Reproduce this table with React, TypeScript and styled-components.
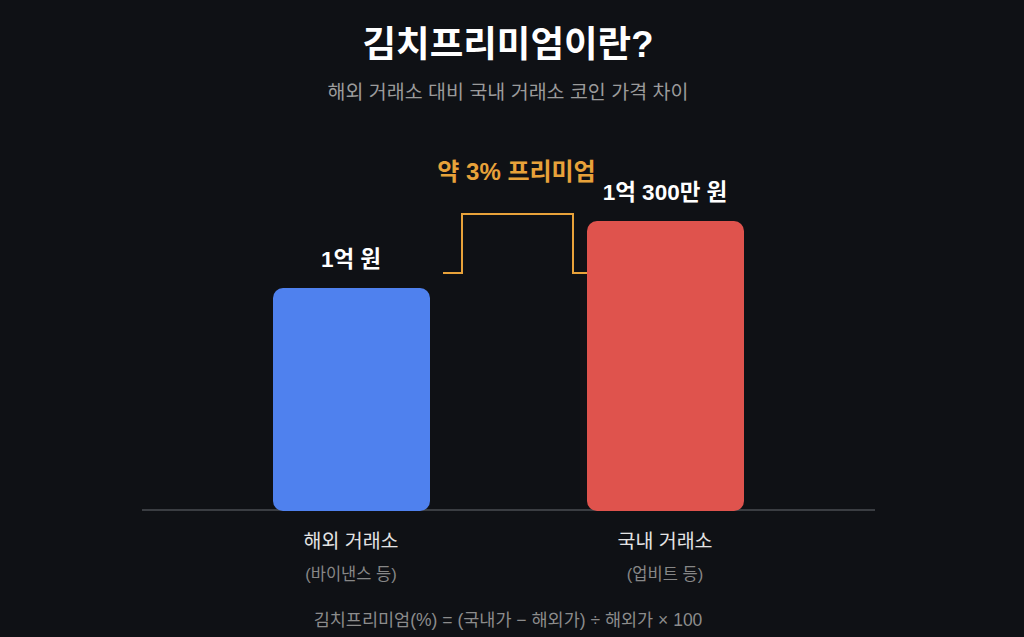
import React from 'react';
import styled, { createGlobalStyle } from 'styled-components';

const GlobalStyle = createGlobalStyle`
  html, body {
    margin: 0;
    padding: 0;
    background: #0f1115;
  }
  body {
    font-family: 'Liberation Sans', 'Noto Sans CJK KR', sans-serif;
  }
`;

const exchanges = [
  { name: '해외 거래소', note: '(바이낸스 등)', value: '1억 원', height: 223, color: '#4f81ee' },
  { name: '국내 거래소', note: '(업비트 등)', value: '1억 300만 원', height: 290, color: '#df534d' },
];

function App() {
  return (
    <>
      <GlobalStyle />
      <Page>
        <Title>김치프리미엄이란?</Title>
        <Subtitle>해외 거래소 대비 국내 거래소 코인 가격 차이</Subtitle>

        <Chart>
          <BarsRow>
            {exchanges.map((ex) => (
              <BarColumn key={ex.name}>
                <ValueLabel>{ex.value}</ValueLabel>
                <Bar $color={ex.color} style={{ height: ex.height }} />
              </BarColumn>
            ))}
          </BarsRow>
          <Baseline />

          {/* premium annotation */}
          <PremiumLabel>약 3% 프리미엄</PremiumLabel>
          <Bracket width="152" height="62" viewBox="0 0 152 62">
            <path
              d="M1 60 H20 V1 H131 V60 H151"
              fill="none"
              stroke="#e8a23a"
              strokeWidth="2"
            />
          </Bracket>
        </Chart>

        <LabelsRow>
          {exchanges.map((ex) => (
            <LabelColumn key={ex.name}>
              <ExchangeName>{ex.name}</ExchangeName>
              <ExchangeNote>{ex.note}</ExchangeNote>
            </LabelColumn>
          ))}
        </LabelsRow>

        <Formula>김치프리미엄(%) = (국내가 − 해외가) ÷ 해외가 × 100</Formula>
      </Page>
    </>
  );
}

export default App;

// Styled Components
const Page = styled.div`
  width: 1016px;
  height: 637px;
  display: flex;
  flex-direction: column;
  align-items: center;
  padding-top: 23px;
  box-sizing: border-box;
  overflow: hidden;
`;

const Title = styled.h1`
  margin: 0;
  font-size: 36.5px;
  line-height: 44px;
  font-weight: 700;
  color: #ffffff;
`;

const Subtitle = styled.p`
  margin: 12px 0 0;
  font-size: 19.5px;
  line-height: 26px;
  color: #9b9b9b;
`;

const Chart = styled.div`
  position: relative;
  width: 733px;
  margin-top: 15px;
  padding-top: 60px;
`;

const BarsRow = styled.div`
  display: flex;
  justify-content: center;
  align-items: flex-end;
  gap: 157px;
`;

const BarColumn = styled.div`
  width: 157px;
  display: flex;
  flex-direction: column;
  align-items: center;
  position: relative;
  z-index: 1;
`;

const ValueLabel = styled.div`
  font-size: 22.5px;
  line-height: 26px;
  font-weight: 700;
  color: #ffffff;
  margin-bottom: 15px;
  white-space: nowrap;
`;

const Bar = styled.div<{ $color: string }>`
  width: 100%;
  background: ${(p) => p.$color};
  border-radius: 10px;
`;

const Baseline = styled.div`
  height: 2px;
  margin-top: -2px;
  background: #3a3d42;
`;

const PremiumLabel = styled.div`
  position: absolute;
  left: 375px;
  top: 37px;
  transform: translateX(-50%);
  font-size: 24px;
  line-height: 30px;
  font-weight: 700;
  color: #e8a23a;
  white-space: nowrap;
`;

const Bracket = styled.svg`
  position: absolute;
  left: 300px;
  top: 93px;
  display: block;
`;

const LabelsRow = styled.div`
  width: 733px;
  display: flex;
  justify-content: center;
  gap: 157px;
  margin-top: 17px;
`;

const LabelColumn = styled.div`
  width: 157px;
  display: flex;
  flex-direction: column;
  align-items: center;
  gap: 9px;
`;

const ExchangeName = styled.div`
  font-size: 19.5px;
  line-height: 26px;
  color: #e4e4e4;
  white-space: nowrap;
`;

const ExchangeNote = styled.div`
  font-size: 16.5px;
  line-height: 22px;
  color: #878787;
  white-space: nowrap;
`;

const Formula = styled.div`
  margin-top: 23px;
  font-size: 17.5px;
  line-height: 24px;
  color: #8c8c8c;
  white-space: nowrap;
`;
